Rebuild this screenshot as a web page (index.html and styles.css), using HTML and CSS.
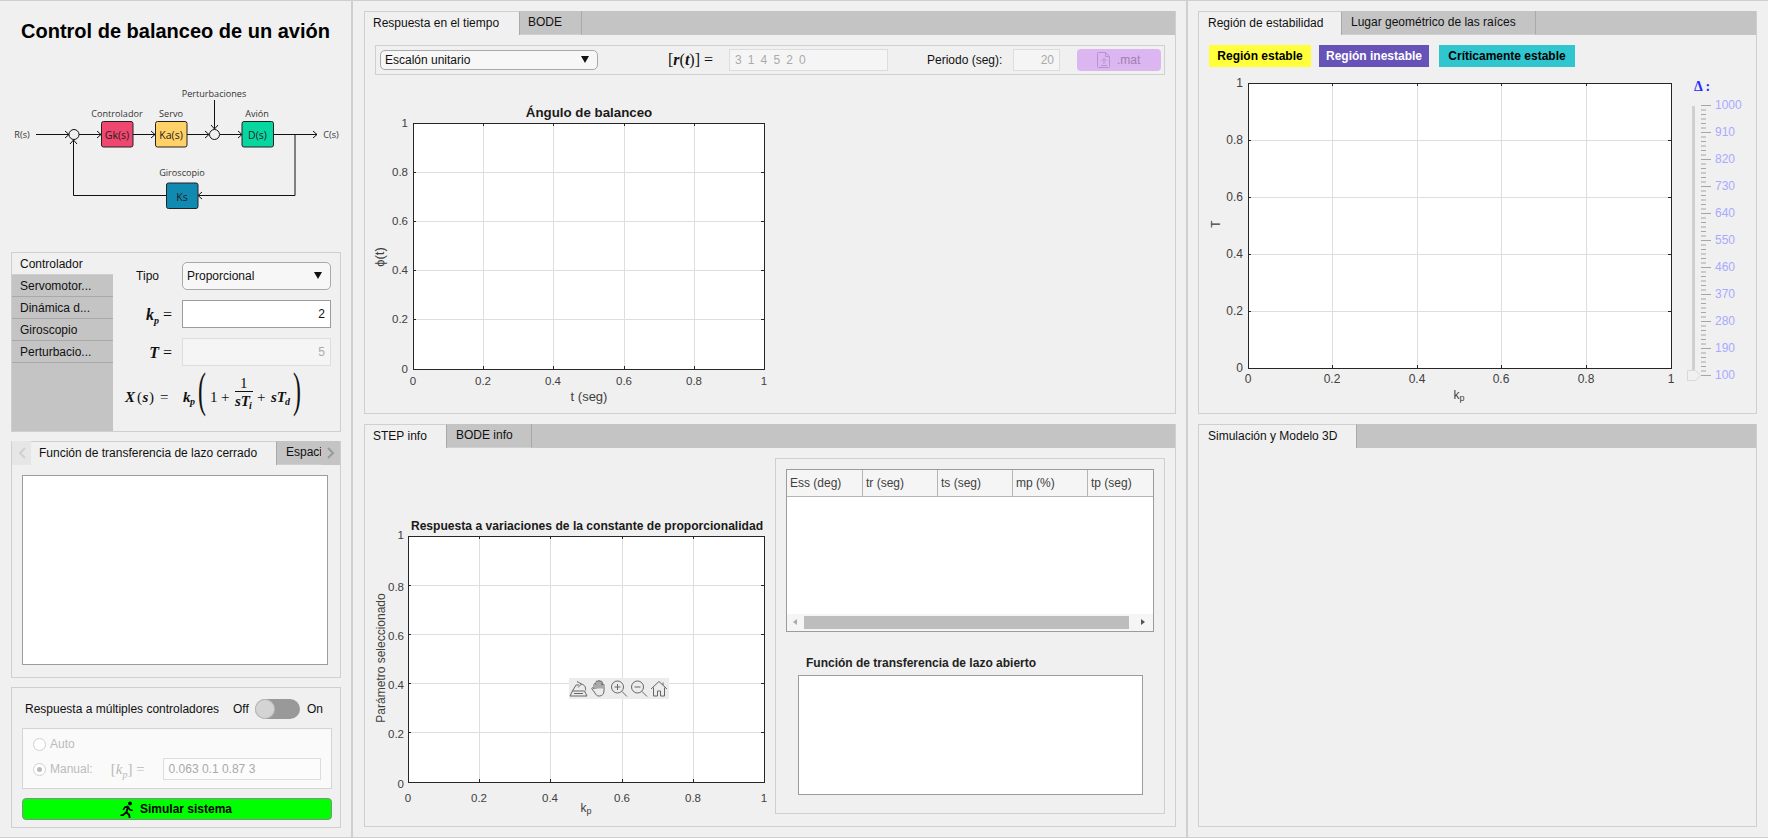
FILE: index.html
```html
<!DOCTYPE html>
<html lang="es">
<head>
    <meta charset="utf-8">
    <title>Control de balanceo de un avión</title>
    <link rel="stylesheet" href="styles.css">
</head>
<body>
<div class="app">

    <!-- Left column -->
    <div class="col colLeft">
        <div class="header">
            <h1 class="appTitle">Control de balanceo de un avión</h1>
            <svg class="diagram" width="351" height="130" viewBox="0 88 351 130">
                <g class="wires">
                    <path d="M36 134.5H69M79 134.5H101M133 134.5H155M187 134.5H209M220 134.5H242M273 134.5H317"/>
                    <path d="M295 134.5V195.5H198M166 195.5H73.5V140M214.5 100V129"/>
                    <path d="M97 131l4 3.500l-4 3.500M151 131l4 3.500l-4 3.500M238 131l4 3.500l-4 3.500M313 131l4 3.500l-4 3.500M202 192l-4 3.500l4 3.500"/>
                    <path d="M65 131l4 3.500l-4 3.500M205 131l4 3.500l-4 3.500M70 144l3.500-4l3.500 4M211 125l3.500 4l3.500-4"/>
                    <circle cx="74" cy="134.500" r="5"/>
                    <circle cx="214.500" cy="134.500" r="5"/>
                </g>
                <g class="blocks">
                    <rect x="101.500" y="121.500" width="31.500" height="25.500" rx="2" fill="#ef476f"/>
                    <rect x="155.500" y="121.500" width="31.500" height="25.500" rx="2" fill="#ffd166"/>
                    <rect x="242" y="121.500" width="31.500" height="25.500" rx="2" fill="#06d6a0"/>
                    <rect x="166.500" y="183" width="31.500" height="25.500" rx="2" fill="#118ab2"/>
                </g>
                <g class="diagramText">
                    <text x="22" y="138">R(s)</text>
                    <text x="331" y="138">C(s)</text>
                    <text x="214" y="97">Perturbaciones</text>
                    <text x="117" y="117">Controlador</text>
                    <text x="171" y="117">Servo</text>
                    <text x="257" y="117">Avión</text>
                    <text x="182" y="176">Giroscopio</text>
                </g>
                <g class="blockText">
                    <text x="117" y="139">Gk(s)</text>
                    <text x="171" y="139">Ka(s)</text>
                    <text x="257.500" y="139">D(s)</text>
                    <text x="182" y="201">Ks</text>
                </g>
            </svg>
        </div>

        <div class="ctrlPanel">
            <div class="sideTabs">
                <div class="sideTab sideTabActive">Controlador</div>
                <div class="sideTab">Servomotor...</div>
                <div class="sideTab">Dinámica d...</div>
                <div class="sideTab">Giroscopio</div>
                <div class="sideTab">Perturbacio...</div>
            </div>
            <div class="ctrlForm">
                <div class="formRow">
                    <span class="formLabel tipoLabel">Tipo</span>
                    <div class="dropdown dropdownTipo">Proporcional<span class="caret"></span></div>
                </div>
                <div class="formRow">
                    <span class="formLabel math mathDown"><b>k<sub>p</sub></b> =</span>
                    <div class="field fieldKp">2</div>
                </div>
                <div class="formRow formRowLow">
                    <span class="formLabel math mathDown"><b>T</b> =</span>
                    <div class="field fieldOff">5</div>
                </div>
                <svg class="formula" width="227" height="65" viewBox="113 363 227 65">
                    <text x="125" y="404">X</text>
                    <text class="mathUp" x="137" y="404">(</text>
                    <text x="142.500" y="404">s</text>
                    <text class="mathUp" x="149" y="404">)</text>
                    <text class="mathUp" x="160" y="404">=</text>
                    <text x="183" y="404">k</text>
                    <text class="mathSub" x="190" y="407">p</text>
                    <text class="paren" transform="translate(198 408) scale(.7 1.420)">(</text>
                    <text class="mathUp" x="210" y="404">1</text>
                    <text class="mathUp" x="221" y="404">+</text>
                    <text class="mathUp" x="240" y="390">1</text>
                    <path class="fracBar" d="M235 393.500H253"/>
                    <text x="235" y="408">sT</text>
                    <text class="mathSub" x="249" y="411">i</text>
                    <text class="mathUp" x="257" y="404">+</text>
                    <text x="271" y="404">sT</text>
                    <text class="mathSub" x="285" y="407">d</text>
                    <text class="paren" transform="translate(293 408) scale(.7 1.420)">)</text>
                </svg>
            </div>
        </div>

        <div class="tabGroup closedLoop">
            <div class="tabStrip">
                <div class="scrollBtn"><svg width="10" height="14" viewBox="0 0 10 14"><path class="chevron" d="M8 2L3 7l5 5"/></svg></div>
                <div class="tab tabActive tabWide">Función de transferencia de lazo cerrado</div>
                <div class="tab tabCut">Espaci</div>
                <div class="scrollBtn scrollNext"><svg width="10" height="14" viewBox="0 0 10 14"><path class="chevron" d="M2 2l5 5l-5 5"/></svg></div>
            </div>
            <div class="tfBox tfClosed"></div>
        </div>

        <div class="multiPanel">
            <div class="multiHead">
                <span class="multiLabel">Respuesta a múltiples controladores</span>
                <span class="offLabel">Off</span>
                <span class="switch"><span class="switchKnob"></span></span>
                <span>On</span>
            </div>
            <div class="multiBox">
                <div class="radioRow"><span class="radio"></span>Auto</div>
                <div class="radioRow">
                    <span class="radio radioOn"></span>
                    <span class="manualLabel">Manual:</span>
                    <span class="math mathOff">[<i>k<sub>p</sub></i>] =</span>
                    <div class="field manualField">0.063 0.1 0.87 3</div>
                </div>
            </div>
            <button class="runBtn">
                <svg width="16" height="17" viewBox="0 0 16 17"><circle cx="10" cy="2.500" r="1.900"/><path d="M8 4.500l-3.500 1-2 3 1.300.7 1.500-2.200 1.500-.3-1.300 4-3 2.500-2 .3v1.500l3 .1 2.600-2.500 2.200 1.700.7 3.600h1.600l-.6-4.700-2.500-2.100 1-3 1 1.400 3 .7.3-1.400-2.500-.7-1.500-2.500z"/></svg>
                Simular sistema
            </button>
        </div>
    </div>

    <!-- Middle column -->
    <div class="col colMid">
        <div class="tabGroup mainGroup">
            <div class="tabStrip">
                <div class="tab tabActive tabResp">Respuesta en el tiempo</div>
                <div class="tab tabBode">BODE</div>
            </div>
            <div class="inputBar">
                <div class="dropdown dropdownInput">Escalón unitario<span class="caret"></span></div>
                <span class="math rLabel">[<b>r</b>(<b>t</b>)] =</span>
                <div class="field fieldSignal">3 1 4 5 2 0</div>
                <span class="periodLabel">Periodo (seg):</span>
                <div class="field fieldPeriod">20</div>
                <div class="matBtn">
                    <svg width="16" height="18" viewBox="0 0 16 18"><path d="M2.500 1.500h7l4 4v10a1 1 0 0 1-1 1h-10a1 1 0 0 1-1-1v-13a1 1 0 0 1 1-1zM9.500 1.500v4h4M8 13V8M5.500 10L8 7.500l2.500 2.500M5 14.500h6"/></svg>
                    .mat
                </div>
            </div>
            <svg class="plot plotTime" width="410" height="320" viewBox="-48 -29 410 320">
                <rect class="plotBg" x="0.500" y="0.500" width="351" height="246"/>
                <path class="grid" d="M70.500 0V246M140.500 0V246M211.500 0V246M281.500 0V246M0 49.500H351M0 98.500H351M0 147.500H351M0 196.500H351"/>
                <path class="tick" d="M70.500 0v3M140.500 0v3M211.500 0v3M281.500 0v3M70.500 246v-3M140.500 246v-3M211.500 246v-3M281.500 246v-3M0 49.500h3M0 98.500h3M0 147.500h3M0 196.500h3M351 49.500h-3M351 98.500h-3M351 147.500h-3M351 196.500h-3"/>
                <rect class="box" x="0.500" y="0.500" width="351" height="246"/>
                <text class="plotTitle titleBig" x="176" y="-6">Ángulo de balanceo</text>
                <g class="yTicks">
                    <text x="-5" y="4">1</text><text x="-5" y="53">0.8</text><text x="-5" y="102">0.6</text><text x="-5" y="151">0.4</text><text x="-5" y="200">0.2</text><text x="-5" y="250">0</text>
                </g>
                <g class="xTicks">
                    <text x="0" y="262">0</text><text x="70" y="262">0.2</text><text x="140" y="262">0.4</text><text x="211" y="262">0.6</text><text x="281" y="262">0.8</text><text x="351" y="262">1</text>
                </g>
                <text class="axisLabel axisBig" x="176" y="278">t (seg)</text>
                <text class="axisLabel axisBig" transform="translate(-29 134) rotate(-90)">ϕ(t)</text>
            </svg>
        </div>

        <div class="tabGroup mainGroup lowerGroup">
            <div class="tabStrip">
                <div class="tab tabActive tabStep">STEP info</div>
                <div class="tab tabBodeInfo">BODE info</div>
            </div>
            <div class="infoRow">
                <div class="plotWrap">
                    <svg class="plot" width="410" height="320" viewBox="-43 -36 410 320">
                        <rect class="plotBg" x="0.500" y="0.500" width="356" height="246"/>
                        <path class="grid" d="M71.500 0V246M142.500 0V246M214.500 0V246M285.500 0V246M0 49.500H356M0 98.500H356M0 147.500H356M0 196.500H356"/>
                        <path class="tick" d="M71.500 0v3M142.500 0v3M214.500 0v3M285.500 0v3M71.500 246v-3M142.500 246v-3M214.500 246v-3M285.500 246v-3M0 49.500h3M0 98.500h3M0 147.500h3M0 196.500h3M356 49.500h-3M356 98.500h-3M356 147.500h-3M356 196.500h-3"/>
                        <rect class="box" x="0.500" y="0.500" width="356" height="246"/>
                        <text class="plotTitle" x="179" y="-6">Respuesta a variaciones de la constante de proporcionalidad</text>
                        <g class="yTicks">
                            <text x="-4" y="3">1</text><text x="-4" y="54.500">0.8</text><text x="-4" y="103.500">0.6</text><text x="-4" y="152.500">0.4</text><text x="-4" y="201.500">0.2</text><text x="-4" y="252">0</text>
                        </g>
                        <g class="xTicks">
                            <text x="0" y="266">0</text><text x="71" y="266">0.2</text><text x="142" y="266">0.4</text><text x="214" y="266">0.6</text><text x="285" y="266">0.8</text><text x="356" y="266">1</text>
                        </g>
                        <text class="axisLabel" x="178" y="276">k<tspan class="subTxt" dy="2">p</tspan></text>
                        <text class="axisLabel" transform="translate(-23 122) rotate(-90)">Parámetro seleccionado</text>
                    </svg>
                    <div class="axesToolbar">
                        <svg width="20" height="21" viewBox="0 0 20 21"><path d="M1 18h17l-2.500-5H3.500zM3.500 13l3.500-6h3M5 15.500h9M8 3.500l4.500 2.500l-3.500 3.500M12 6c3.500 .5 5 3 4.500 6.500"/></svg>
                        <svg width="20" height="21" viewBox="0 0 20 21"><path d="M5 11V6.500a1 1 0 0 1 2 0V4a1 1 0 0 1 2 0v-.5a1 1 0 0 1 2 0V4a1 1 0 0 1 2 0v3a1 1 0 0 1 2 0v6c0 3-2 5-4.500 5H10c-2 0-3-1-4-3l-3-4c-.7-1 .7-2 1.500-1z"/><path d="M7 6.500V11M9 4v6.500M11 3.500v7M13 4.500v6"/></svg>
                        <svg width="20" height="21" viewBox="0 0 20 21"><circle cx="8.500" cy="9" r="6"/><path d="M13 13.500l5 5M5.500 9h6M8.500 6v6"/></svg>
                        <svg width="20" height="21" viewBox="0 0 20 21"><circle cx="8.500" cy="9" r="6"/><path d="M13 13.500l5 5M5.500 9h6"/></svg>
                        <svg width="20" height="21" viewBox="0 0 20 21"><path d="M2 11l8-7.500l8 7.500M4.500 9.500V18h4v-5h3v5h4V9.500M14 4.500v2.500"/></svg>
                    </div>
                </div>
                <div class="infoPanel">
                    <div class="dataTable">
                        <div class="tableHead">
                            <span class="th thFirst">Ess (deg)</span>
                            <span class="th">tr (seg)</span>
                            <span class="th">ts (seg)</span>
                            <span class="th">mp (%)</span>
                            <span class="th thLast">tp (seg)</span>
                        </div>
                        <div class="tableBody"></div>
                        <div class="hScroll">
                            <span class="arrowLeft"></span>
                            <span class="hThumb"></span>
                            <span class="arrowRight"></span>
                        </div>
                    </div>
                    <div class="openTitle">Función de transferencia de lazo abierto</div>
                    <div class="tfBox tfOpen"></div>
                </div>
            </div>
        </div>
    </div>

    <!-- Right column -->
    <div class="col colRight">
        <div class="tabGroup rightGroup">
            <div class="tabStrip">
                <div class="tab tabActive tabRegion">Región de estabilidad</div>
                <div class="tab tabLugar">Lugar geométrico de las raíces</div>
            </div>
            <div class="legend">
                <span class="chip chipYellow">Región estable</span>
                <span class="chip chipPurple">Región inestable</span>
                <span class="chip chipCyan">Críticamente estable</span>
            </div>
            <div class="stabRow">
                <svg class="plot" width="486" height="335" viewBox="-49 -12 486 335">
                    <rect class="plotBg" x="0.500" y="0.500" width="423" height="285"/>
                    <path class="grid" d="M84.500 0V285M169.500 0V285M253.500 0V285M338.500 0V285M0 57.500H423M0 114.500H423M0 171.500H423M0 228.500H423"/>
                    <path class="tick" d="M84.500 0v3M169.500 0v3M253.500 0v3M338.500 0v3M84.500 285v-3M169.500 285v-3M253.500 285v-3M338.500 285v-3M0 57.500h3M0 114.500h3M0 171.500h3M0 228.500h3M423 57.500h-3M423 114.500h-3M423 171.500h-3M423 228.500h-3"/>
                    <rect class="box" x="0.500" y="0.500" width="423" height="285"/>
                    <g class="yTicks ticksBig">
                        <text x="-5" y="4">1</text><text x="-5" y="60.500">0.8</text><text x="-5" y="117.500">0.6</text><text x="-5" y="174.500">0.4</text><text x="-5" y="231.500">0.2</text><text x="-5" y="288.500">0</text>
                    </g>
                    <g class="xTicks ticksBig">
                        <text x="0" y="300">0</text><text x="84" y="300">0.2</text><text x="169" y="300">0.4</text><text x="253" y="300">0.6</text><text x="338" y="300">0.8</text><text x="423" y="300">1</text>
                    </g>
                    <text class="axisLabel" x="211" y="316">k<tspan class="subTxt" dy="2">p</tspan></text>
                    <text class="axisLabel" transform="translate(-28 141) rotate(-90)">T</text>
                </svg>
                <svg class="slider" width="70" height="335" viewBox="1685 70 70 335">
                    <text class="deltaLabel" x="1694" y="90">Δ :</text>
                    <rect class="sliderTrack" x="1692" y="105" width="3" height="265"/>
                    <line class="minorTicks" x1="1703.500" y1="104" x2="1703.500" y2="375"/>
                    <path class="majorTicks" d="M1701 104.500h10M1701 131.500h10M1701 158.500h10M1701 185.500h10M1701 212.500h10M1701 239.500h10M1701 266.500h10M1701 293.500h10M1701 320.500h10M1701 347.500h10M1701 374.500h10"/>
                    <g class="sliderText">
                        <text x="1715" y="108">1000</text><text x="1715" y="135">910</text><text x="1715" y="162">820</text><text x="1715" y="189">730</text><text x="1715" y="216">640</text><text x="1715" y="243">550</text><text x="1715" y="270">460</text><text x="1715" y="297">370</text><text x="1715" y="324">280</text><text x="1715" y="351">190</text><text x="1715" y="378">100</text>
                    </g>
                    <path class="sliderThumb" d="M1687.500 369.500h8l5 5l-5 5h-8z"/>
                </svg>
            </div>
        </div>

        <div class="tabGroup rightGroup lowerGroup">
            <div class="tabStrip">
                <div class="tab tabActive tabSim">Simulación y Modelo 3D</div>
            </div>
        </div>
    </div>

</div>
</body>
</html>
```

FILE: styles.css
```css
* {
    box-sizing: border-box;
}

body {
    margin: 0;
    width: 1768px;
    height: 838px;
    overflow: hidden;
    background-color: #f0f0f0;
    color: #111;
    font-family: "Liberation Sans", Arial, sans-serif;
    font-size: 12px;
}

.app {
    display: flex;
    height: 838px;
    border-top: 1px solid #cfcfcf;
    border-bottom: 1px solid #cfcfcf;
}

.col {
    flex: none;
    height: 100%;
}

.colLeft {
    width: 353px;
    padding-left: 11px;
    border-right: 2px solid #cfcfcf;
}

.colMid {
    width: 835px;
    padding-left: 11px;
    padding-top: 10px;
    border-right: 2px solid #cfcfcf;
}

.colRight {
    width: 580px;
    padding-left: 10px;
    padding-top: 10px;
}

/* Left column */

.header {
    height: 251px;
    margin-left: -11px;
}

.appTitle {
    margin: 0;
    padding-top: 18px;
    height: 87px;
    text-align: center;
    font-size: 20px;
    line-height: 24px;
    color: #000;
}

.diagram {
    display: block;
}

.wires path,
.wires circle {
    fill: none;
    stroke: #111;
    stroke-width: 1;
}

.blocks rect {
    stroke: #222;
    stroke-width: 1;
}

.diagramText text,
.blockText text {
    font-family: "Open Sans", sans-serif;
    font-size: 9.100px;
    text-anchor: middle;
    fill: #333;
}

.blockText text {
    font-size: 10.500px;
    fill: #222;
}

.ctrlPanel {
    display: flex;
    width: 330px;
    height: 180px;
    border: 1px solid #cfcfcf;
}

.sideTabs {
    width: 101px;
    background-color: #c4c4c4;
}

.sideTab {
    height: 22px;
    padding-left: 8px;
    line-height: 22px;
    border-bottom: 1px solid #a9a9a9;
}

.sideTabActive {
    background-color: #f0f0f0;
    border-bottom-color: #cfcfcf;
}

.ctrlForm {
    padding-top: 9px;
}

.formRow {
    display: flex;
    align-items: center;
    height: 28px;
    margin-bottom: 10px;
}

.formLabel {
    width: 69px;
    padding-right: 10px;
    text-align: right;
}

.tipoLabel {
    padding-right: 23px;
}

.math {
    font-family: "Liberation Serif", serif;
    font-size: 16px;
    color: #111;
}

.mathDown {
    padding-top: 2px;
}

.math b {
    font-style: italic;
}

.math sub {
    font-size: 10px;
    line-height: 0;
}

.dropdown {
    position: relative;
    background-color: #f7f7f7;
    border: 1px solid #a9a9a9;
    border-radius: 5px;
    padding-left: 4px;
    color: #111;
}

.dropdownTipo {
    width: 149px;
    height: 28px;
    line-height: 26px;
}

.caret {
    position: absolute;
    right: 8px;
    top: 50%;
    margin-top: -4px;
    border-left: 4px solid transparent;
    border-right: 4px solid transparent;
    border-top: 7px solid #111;
}

.field {
    height: 28px;
    padding: 0 5px;
    text-align: right;
    line-height: 26px;
    border: 1px solid #ddd;
    background-color: #f5f5f5;
    color: #aaa;
}

.fieldKp {
    width: 149px;
    border-color: #9c9c9c;
    background-color: #fff;
    color: #111;
}

.fieldOff {
    width: 149px;
}

.formula {
    display: block;
    margin-top: -15px;
}

.formula text {
    font-family: "Liberation Serif", serif;
    font-style: italic;
    font-weight: bold;
    font-size: 15px;
    fill: #111;
}

.formula .mathUp {
    font-style: normal;
    font-weight: normal;
}

.formula .mathSub {
    font-size: 10px;
}

.formula .paren {
    font-style: normal;
    font-weight: normal;
    font-size: 34px;
}

.fracBar {
    stroke: #111;
    fill: none;
}

.tabGroup {
    border: 1px solid #cfcfcf;
    border-top: 0;
}

.tabStrip {
    display: flex;
    flex: none;
    height: 24px;
    background-color: #c4c4c4;
}

.tab {
    padding-left: 8px;
    line-height: 23px;
    border-right: 1px solid #a9a9a9;
    border-bottom: 1px solid #cfcfcf;
}

.tabActive {
    background-color: #f0f0f0;
    border-top: 1px solid #cfcfcf;
    border-bottom: 0;
    line-height: 22px;
}

.closedLoop {
    width: 330px;
    height: 237px;
    margin-top: 9px;
}

.scrollBtn {
    display: flex;
    align-items: center;
    justify-content: center;
    width: 19px;
    background-color: #e6e6e6;
}

.scrollNext {
    width: 19px;
    background-color: #c4c4c4;
}

.chevron {
    fill: none;
    stroke: #d0d0d0;
    stroke-width: 2;
}

.scrollNext .chevron {
    stroke: #999;
}

.tabWide {
    width: 246px;
    padding-left: 8px;
}

.tabCut {
    width: 44px;
    padding-left: 9px;
    border-right: 0;
    overflow: hidden;
    white-space: nowrap;
}

.tfBox {
    background-color: #fff;
    border: 1px solid #9c9c9c;
}

.tfClosed {
    width: 306px;
    height: 190px;
    margin: 10px 0 0 10px;
}

.multiPanel {
    width: 330px;
    height: 141px;
    margin-top: 9px;
    padding: 10px 9px 0 10px;
    border: 1px solid #cfcfcf;
}

.multiHead {
    display: flex;
    align-items: center;
    height: 22px;
    padding-left: 3px;
}

.multiLabel {
    width: 208px;
}

.offLabel {
    width: 22px;
}

.switch {
    width: 45px;
    height: 20px;
    margin-right: 7px;
    padding: 0 1px;
    border-radius: 10px;
    background-color: #999;
}

.switchKnob {
    display: block;
    width: 18px;
    height: 18px;
    margin-top: 1px;
    border-radius: 50%;
    background-color: #d4d4d4;
    box-shadow: 0 0 0 1px #bbb;
}

.multiBox {
    width: 310px;
    height: 61px;
    margin-top: 8px;
    padding: 4px 10px 0;
    border: 1px solid #d4d4d4;
    background-color: #fafafa;
    color: #bbb;
}

.radioRow {
    display: flex;
    align-items: center;
    height: 22px;
    margin-bottom: 3px;
}

.radio {
    position: relative;
    flex: none;
    width: 13px;
    height: 13px;
    margin-right: 4px;
    border: 1px solid #d0d0d0;
    border-radius: 50%;
    background-color: #fff;
}

.radioOn::after {
    content: "";
    position: absolute;
    left: 3px;
    top: 3px;
    width: 5px;
    height: 5px;
    border-radius: 50%;
    background-color: #bbb;
}

.manualLabel {
    width: 61px;
}

.mathOff {
    width: 52px;
    font-size: 15px;
    color: #bbb;
}

.manualField {
    width: 159px;
    height: 22px;
    line-height: 20px;
    text-align: left;
    background-color: #fcfcfc;
}

.runBtn {
    display: flex;
    align-items: center;
    justify-content: center;
    gap: 4px;
    width: 310px;
    height: 22px;
    margin-top: 9px;
    padding: 0 2px 0 0;
    border: 1px solid #8a8a8a;
    border-radius: 4px;
    background-color: #00ff00;
    color: #000;
    font-family: inherit;
    font-size: 12px;
    font-weight: bold;
}

.runBtn svg {
    fill: #000;
}

/* Middle column */

.mainGroup {
    width: 812px;
    height: 403px;
}

.lowerGroup {
    margin-top: 10px;
}

.tabResp {
    width: 155px;
}

.tabBode {
    width: 62px;
}

.tabStep {
    width: 82px;
}

.tabBodeInfo {
    width: 85px;
    padding-left: 9px;
}

.inputBar {
    display: flex;
    align-items: center;
    height: 30px;
    margin: 10px 10px 0;
    padding-left: 4px;
    border: 1px solid #cfcfcf;
}

.dropdownInput {
    width: 218px;
    height: 20px;
    line-height: 18px;
}

.rLabel {
    width: 61px;
    margin-left: 70px;
}

.fieldSignal {
    width: 159px;
    height: 22px;
    line-height: 20px;
    text-align: left;
    letter-spacing: 1.400px;
}

.periodLabel {
    width: 86px;
    margin-left: 39px;
}

.fieldPeriod {
    width: 47px;
    height: 22px;
    line-height: 20px;
}

.matBtn {
    display: flex;
    align-items: center;
    gap: 5px;
    width: 84px;
    height: 22px;
    margin-left: 17px;
    padding-left: 19px;
    border-radius: 4px;
    background-color: #dcb6f0;
    color: #9d80b3;
}

.matBtn svg {
    fill: none;
    stroke: #b893cf;
}

.plot {
    display: block;
    flex: none;
}

.plotTime {
    margin-top: 19px;
}

.plotBg {
    fill: #fff;
}

.grid {
    fill: none;
    stroke: #dedede;
}

.tick {
    fill: none;
    stroke: #262626;
}

.box {
    fill: none;
    stroke: #262626;
}

.plot text {
    font-size: 11.500px;
    fill: #404040;
}

.plot .plotTitle {
    font-size: 12.100px;
    font-weight: bold;
    text-anchor: middle;
    fill: #1a1a1a;
}

.plot .titleBig {
    font-size: 13.300px;
}

.yTicks text {
    text-anchor: end;
}

.xTicks text {
    text-anchor: middle;
}

.plot .ticksBig text {
    font-size: 12px;
}

.plot .axisLabel {
    font-size: 12px;
    text-anchor: middle;
}

.plot .axisBig {
    font-size: 13px;
}

.plot .subTxt {
    font-size: 9px;
}

.infoRow {
    display: flex;
}

.plotWrap {
    position: relative;
    width: 410px;
    padding-top: 52px;
}

.axesToolbar {
    position: absolute;
    left: 204px;
    top: 230px;
    display: flex;
    width: 100px;
    height: 21px;
    background-color: #ececec;
}

.axesToolbar svg {
    fill: none;
    stroke: #666;
}

.infoPanel {
    width: 390px;
    height: 356px;
    margin-top: 10px;
    padding: 10px;
    border: 1px solid #cfcfcf;
}

.dataTable {
    width: 368px;
    height: 163px;
    border: 1px solid #9c9c9c;
    background-color: #fff;
}

.tableHead {
    display: flex;
    height: 27px;
    background-color: #f5f5f5;
    border-bottom: 1px solid #b5b5b5;
}

.th {
    width: 75px;
    padding-left: 3px;
    line-height: 26px;
    color: #404040;
    border-right: 1px solid #b5b5b5;
}

.thFirst {
    width: 76px;
}

.thLast {
    width: auto;
    flex: 1;
    border-right: 0;
}

.tableBody {
    height: 117px;
}

.hScroll {
    position: relative;
    height: 17px;
    background-color: #f5f5f5;
}

.hThumb {
    position: absolute;
    left: 17px;
    top: 2px;
    width: 325px;
    height: 13px;
    background-color: #bdbdbd;
}

.arrowLeft,
.arrowRight {
    position: absolute;
    top: 5px;
    border-top: 3.500px solid transparent;
    border-bottom: 3.500px solid transparent;
}

.arrowLeft {
    left: 6px;
    border-right: 4px solid #aaa;
}

.arrowRight {
    right: 8px;
    border-left: 4px solid #555;
}

.openTitle {
    height: 43px;
    padding: 24px 0 0 20px;
    line-height: 14px;
    font-size: 12px;
    font-weight: bold;
    color: #222;
}

.tfOpen {
    width: 345px;
    height: 120px;
    margin-left: 12px;
}

/* Right column */

.rightGroup {
    width: 559px;
    height: 403px;
}

.tabRegion {
    width: 143px;
    padding-left: 9px;
}

.tabLugar {
    width: 194px;
    padding-left: 9px;
}

.tabSim {
    width: 158px;
    padding-left: 9px;
}

.legend {
    display: flex;
    height: 22px;
    margin: 10px 0 0 10px;
}

.chip {
    padding-top: 4px;
    text-align: center;
    line-height: 14px;
    font-size: 12px;
    font-weight: bold;
}

.chipYellow {
    width: 102px;
    margin-right: 8px;
    background-color: #ffff3c;
    color: #000;
}

.chipPurple {
    width: 110px;
    margin-right: 10px;
    background-color: #6753b8;
    color: #fff;
}

.chipCyan {
    width: 136px;
    background-color: #2fc6d0;
    color: #000;
}

.stabRow {
    display: flex;
    margin-top: 4px;
}

.slider {
    display: block;
    flex: none;
}

.deltaLabel {
    font-family: "Liberation Serif", serif;
    font-weight: bold;
    font-size: 14px;
    fill: #2a2aff;
}

.sliderTrack {
    fill: #d0d0d0;
}

.minorTicks {
    stroke: #a5a5a5;
    stroke-width: 5;
    stroke-dasharray: 1 3.500;
}

.majorTicks {
    fill: none;
    stroke: #a5a5a5;
}

.sliderText text {
    font-size: 12px;
    fill: #a9a9ff;
}

.sliderThumb {
    fill: #f0f0f0;
    stroke: #d8d8d8;
}
```
